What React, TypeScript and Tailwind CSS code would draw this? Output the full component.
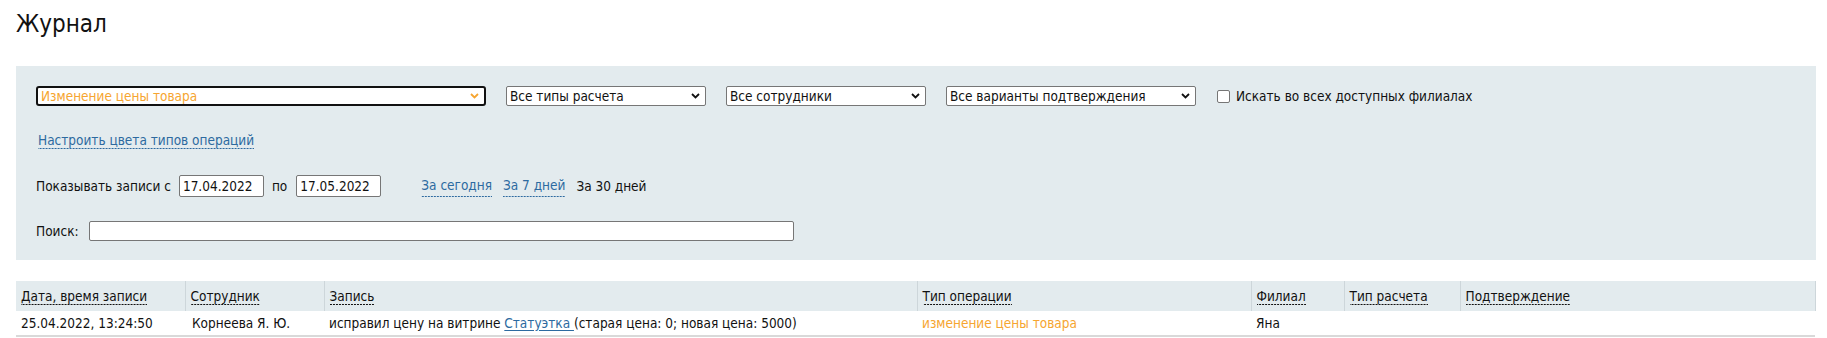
import React from 'react'

const FONT = "font-['DejaVu_Sans_Condensed','DejaVu_Sans',sans-serif]"

function Chevron({ color = '#111' }: { color?: string }) {
  return (
    <svg width="9" height="6" viewBox="0 0 9 6" className="flex-shrink-0">
      <path d="M1 1 L4.5 4.5 L8 1" fill="none" stroke={color} strokeWidth="1.8" />
    </svg>
  )
}

function FakeSelect({ label, className, focused }: { label: string; className: string; focused?: boolean }) {
  return (
    <div
      className={`h-[20px] flex items-center justify-between bg-white pl-[3px] pr-[5px] ${
        focused ? 'border-2 border-[#111] rounded-[3px] text-[#f6a530]' : 'border border-[#767676] rounded-[2px] text-[#111]'
      } ${className}`}
    >
      <span className="whitespace-nowrap leading-[16px]">{label}</span>
      <Chevron color={focused ? '#f6a530' : '#111'} />
    </div>
  )
}

// dashed underline: 2px dash, 1px gap
const dashed =
  'bg-[image:linear-gradient(to_right,currentColor_66%,transparent_66%)] bg-[length:3px_1px] bg-repeat-x bg-bottom pb-[1px]'

const columns = [
  { title: 'Дата, время записи', w: 'w-[169px]' },
  { title: 'Сотрудник', w: 'w-[139px]' },
  { title: 'Запись', w: 'w-[593px]' },
  { title: 'Тип операции', w: 'w-[334px]' },
  { title: 'Филиал', w: 'w-[93px]' },
  { title: 'Тип расчета', w: 'w-[116px]' },
  { title: 'Подтверждение', w: 'w-[355px]' },
]

export default function App() {
  return (
    <div className={`min-h-screen bg-white pl-4 pr-[11px] ${FONT} text-[13.5px] text-[#111]`}>
      <h1 className="pt-[9px] pb-[27px] text-[24px] leading-[30px] font-normal">Журнал</h1>

      {/* Filters */}
      <div className="bg-[#e3ebee] pt-5 pb-[19px] px-5">
        <div className="flex items-center h-[20px]">
          <FakeSelect label="Изменение цены товара" className="w-[450px]" focused />
          <FakeSelect label="Все типы расчета" className="w-[200px] ml-5" />
          <FakeSelect label="Все сотрудники" className="w-[200px] ml-5" />
          <FakeSelect label="Все варианты подтверждения" className="w-[250px] ml-5" />
          <span className="ml-[21px] w-[13px] h-[13px] border border-[#767676] rounded-[2px] bg-white" />
          <span className="ml-[6px]">Искать во всех доступных филиалах</span>
        </div>

        <div className="mt-[26px] h-[16px] leading-[16px] pl-[2px]">
          <span className={`text-[#2d6aa0] ${dashed}`}>Настроить цвета типов операций</span>
        </div>

        <div className="mt-[27px] flex items-center h-[22px]">
          <span>Показывать записи с</span>
          <div className="ml-[8px] w-[85px] h-[22px] border border-[#767676] rounded-[2px] bg-white flex items-center pl-[3px]">
            17.04.2022
          </div>
          <span className="ml-[8px]">по</span>
          <div className="ml-[9px] w-[85px] h-[22px] border border-[#767676] rounded-[2px] bg-white flex items-center pl-[3px]">
            17.05.2022
          </div>
          <span className={`ml-[40px] text-[#2d6aa0] ${dashed}`}>За сегодня</span>
          <span className={`ml-[11px] text-[#2d6aa0] ${dashed}`}>За 7 дней</span>
          <span className="ml-[11px]">За 30 дней</span>
        </div>

        <div className="mt-[24px] flex items-center h-[20px]">
          <span>Поиск:</span>
          <div className="ml-[10px] w-[705px] h-[20px] border border-[#767676] rounded-[2px] bg-white" />
        </div>
      </div>

      {/* Journal table */}
      <table className="mt-[21px] w-[1799px] table-fixed border-collapse">
        <thead>
          <tr className="bg-[#e3ebee] h-[30px]">
            {columns.map(c => (
              <th key={c.title} className={`${c.w} px-[5px] text-left font-normal border-r border-[#cdd6da] align-middle`}>
                <span className={dashed}>{c.title}</span>
              </th>
            ))}
          </tr>
        </thead>
        <tbody>
          <tr className="h-[25px] border-b-2 border-[#d9d9d9]">
            <td className="px-[5px]">25.04.2022, 13:24:50</td>
            <td className="px-[7px]">Корнеева Я. Ю.</td>
            <td className="px-[5px] whitespace-nowrap">
              исправил цену на витрине{' '}
              <span className="text-[#2d6aa0] underline underline-offset-2">Статуэтка </span>
              (старая цена: 0; новая цена: 5000)
            </td>
            <td className="px-[5px] text-[#f6a530]">изменение цены товара</td>
            <td className="px-[5px]">Яна</td>
            <td className="px-[5px]" />
            <td className="px-[5px]" />
          </tr>
        </tbody>
      </table>
    </div>
  )
}
